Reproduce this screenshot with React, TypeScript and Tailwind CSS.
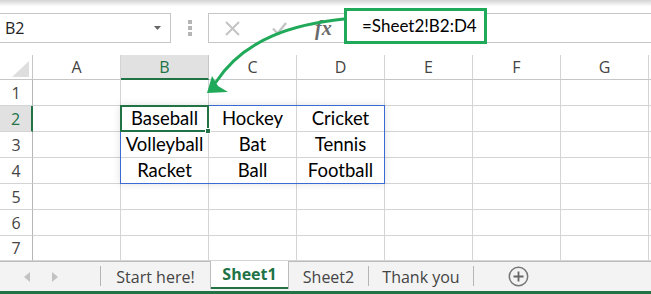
import React from 'react';

const COLS = ['A', 'B', 'C', 'D', 'E', 'F', 'G'];
const ROWS = [1, 2, 3, 4, 5, 6, 7];

const DATA: Record<string, string> = {
    B2: 'Baseball', C2: 'Hockey', D2: 'Cricket',
    B3: 'Volleyball', C3: 'Bat', D3: 'Tennis',
    B4: 'Racket', C4: 'Ball', D4: 'Football',
};

const uiFont = { fontFamily: '"Open Sans", "Noto Sans", sans-serif' };
const cellFont = { fontFamily: 'Lato, "Liberation Sans", sans-serif' };

const gridTemplate = 'grid grid-cols-[33px_repeat(7,88px)_1fr] grid-rows-[25px_repeat(6,26px)_25px]';

function FormulaBar() {
    return (
        <div className="flex h-[30px]">
            {/* name box */}
            <div className="w-[171px] border border-l-0 border-[#c6c6c6] flex items-center justify-between pl-[5px] pr-[9px] text-[16px] text-[#222]" style={uiFont}>
                <span>B2</span>
                <svg width="7" height="4" viewBox="0 0 7 4"><path d="M0 0h7L3.5 4z" fill="#666" /></svg>
            </div>
            <div className="w-[37px] flex flex-col items-center justify-center gap-[2px]">
                <div className="w-[4px] h-[4px] bg-[#b5b5b5]" />
                <div className="w-[4px] h-[4px] bg-[#b5b5b5]" />
                <div className="w-[4px] h-[4px] bg-[#b5b5b5]" />
            </div>
            {/* formula box */}
            <div className="flex-1 border border-r-0 border-[#c6c6c6] flex items-center">
                <div className="w-[130px] flex items-center pl-[16px] gap-[32px]">
                    <svg width="15" height="15" viewBox="0 0 15 15">
                        <path d="M1 1L14 14M14 1L1 14" stroke="#c4c4c4" strokeWidth="2" />
                    </svg>
                    <svg width="15" height="13" viewBox="0 0 15 13">
                        <path d="M1 6.5L5.5 11.5L14 1" stroke="#c4c4c4" strokeWidth="2.4" fill="none" />
                    </svg>
                    <span className="text-[20px] italic font-bold text-[#6a6a6a] leading-none -ml-[4px]" style={{ fontFamily: '"Liberation Serif", serif' }}>fx</span>
                </div>
            </div>
        </div>
    );
}

function SheetGrid() {
    return (
        <div className="relative">
            <div className={gridTemplate} style={uiFont}>
                {/* corner */}
                <div className="border-r border-b border-[#c6c6c6] flex items-end justify-end pr-[3px] pb-[2px]">
                    <svg width="17" height="16" viewBox="0 0 17 16"><path d="M17 0V16H0z" fill="#dedede" /></svg>
                </div>
                {COLS.map((c) => (
                    <div
                        key={c}
                        className={
                            c === 'B'
                                ? 'bg-[#e1e1e1] border-r border-[#c6c6c6] border-b-2 border-b-[#217346] flex items-center justify-center text-[16px] text-[#217346]'
                                : 'border-r border-b border-[#d4d4d4] border-b-[#c6c6c6] flex items-center justify-center text-[16px] text-[#444]'
                        }
                    >
                        {c}
                    </div>
                ))}
                <div className="border-b border-[#c6c6c6]" />

                {ROWS.map((r) => (
                    <React.Fragment key={r}>
                        <div
                            className={
                                r === 2
                                    ? 'bg-[#e1e1e1] border-r-2 border-r-[#217346] border-b border-[#d4d4d4] flex items-center justify-center text-[16px] text-[#217346]'
                                    : 'border-r border-r-[#b6b6b6] border-b border-[#d4d4d4] flex items-center justify-center text-[16px] text-[#444]'
                            }
                        >
                            {r}
                        </div>
                        {COLS.map((c) => (
                            <div
                                key={c}
                                className="border-r border-b border-[#d4d4d4] flex items-center justify-center text-[18.5px] text-black"
                                style={cellFont}
                            >
                                {DATA[c + r] ?? ''}
                            </div>
                        ))}
                        <div className="border-b border-[#d4d4d4]" />
                    </React.Fragment>
                ))}
            </div>

            {/* selection layer over the grid */}
            <div className={`absolute inset-0 pointer-events-none ${gridTemplate}`}>
                {/* range B2:D4 */}
                <div className="col-start-3 col-span-3 row-start-3 row-span-3 -ml-px -mt-px border border-[#3a6ad4] shadow-[0_0_8px_rgba(0,0,0,0.12)]" />
                {/* active cell B2 */}
                <div className="col-start-3 row-start-3 -ml-px -mt-px relative border-2 border-[#217346]">
                    <div className="absolute -right-[4px] -bottom-[4px] w-[6px] h-[6px] bg-[#217346] border border-white" />
                </div>
            </div>
        </div>
    );
}

function TabBar() {
    const tab = 'h-full flex items-center justify-center text-[16px] text-[#444]';
    return (
        <div className="h-[30px] bg-[#f3f3f3] border-t border-[#bdbdbd] flex" style={uiFont}>
            <div className="w-[100px] flex items-center pl-[24px] gap-[22px]">
                <svg width="6" height="10" viewBox="0 0 6 10"><path d="M6 0V10L0 5z" fill="#c2c2c2" /></svg>
                <svg width="6" height="10" viewBox="0 0 6 10"><path d="M0 0V10L6 5z" fill="#c2c2c2" /></svg>
            </div>
            <div className="w-px h-[20px] mt-[4px] bg-[#b5b5b5]" />
            <div className={`${tab} w-[109px]`}>Start here!</div>
            <div className="w-[79px] h-[28px] -mt-px bg-white border-x border-[#bdbdbd] flex flex-col">
                <div className="flex-1 flex items-center justify-center text-[16px] font-bold text-[#217346]">Sheet1</div>
                <div className="h-[2px] bg-[#217346]" />
            </div>
            <div className={`${tab} w-[79px]`}>Sheet2</div>
            <div className="w-px h-[20px] mt-[4px] bg-[#b5b5b5]" />
            <div className={`${tab} w-[104px]`}>Thank you</div>
            <div className="w-px h-[20px] mt-[4px] bg-[#b5b5b5]" />
            <div className="w-[88px] flex items-center justify-center">
                <svg width="21" height="21" viewBox="0 0 21 21">
                    <circle cx="10.5" cy="10.5" r="9.2" stroke="#777" strokeWidth="1.5" fill="none" />
                    <path d="M10.5 5.5V15.5M5.5 10.5H15.5" stroke="#666" strokeWidth="1.8" />
                </svg>
            </div>
        </div>
    );
}

export default function App() {
    return (
        <div className="relative w-[651px] h-[294px] overflow-hidden bg-white">
            <div className="h-[13px] bg-gradient-to-b from-[#d4d4d4] via-white to-white" />
            <FormulaBar />
            <div className="h-[12px]" />
            <SheetGrid />
            <TabBar />
            <div className="h-[3px] bg-[#217346]" />

            {/* highlighted formula */}
            <div className="absolute left-[344px] top-[8px] w-[143px] h-[36px] border-[3px] border-[#21a95a] bg-white flex items-center pl-[15px] text-[17px] text-black" style={cellFont}>
                =Sheet2!B2:D4
            </div>

            {/* arrow */}
            <svg className="absolute inset-0 pointer-events-none" width="651" height="294" viewBox="0 0 651 294">
                <path d="M344 19 C 295 24, 245 38, 216 82" stroke="#21a95a" strokeWidth="3" fill="none" strokeLinecap="round" />
                <path d="M207 93 L212 76 L218 86 L228 92 Z" fill="#21a95a" />
            </svg>
        </div>
    );
}
